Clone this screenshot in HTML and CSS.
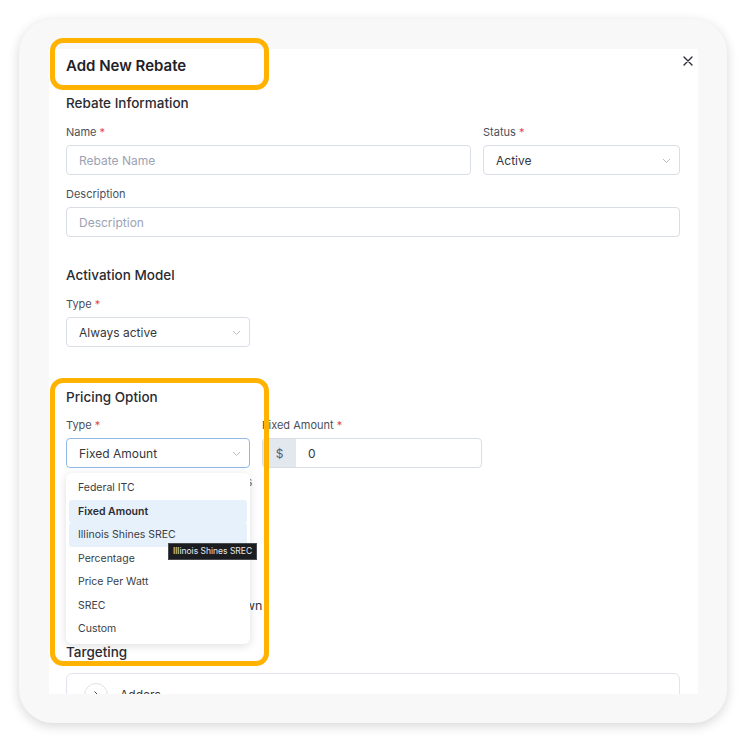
FILE: index.html
```html
<!DOCTYPE html>
<html lang="en">
<head>
  <meta charset="UTF-8">
  <meta name="viewport" content="width=device-width, initial-scale=1.0">
  <title>Add New Rebate</title>
  <link rel="stylesheet" href="styles.css">
</head>
<body>

<div class="frame">
  <div class="modal">
    <button class="close" aria-label="Close">
      <svg width="10" height="10" viewBox="0 0 10 10"><path d="M1 1L9 9M9 1L1 9" stroke="#2b2f3a" stroke-width="1.4" stroke-linecap="round"/></svg>
    </button>

    <h1 class="title">Add New Rebate</h1>

    <h2 class="section">Rebate Information</h2>
    <div class="row row-main">
      <div class="field">
        <label>Name <span class="req">*</span></label>
        <input class="input" type="text" placeholder="Rebate Name">
      </div>
      <div class="field">
        <label>Status <span class="req">*</span></label>
        <div class="select">Active
          <svg class="chev" width="9" height="6" viewBox="0 0 9 6"><path d="M1 1l3.5 3.5L8 1" fill="none" stroke="#b8bec9" stroke-width="1"/></svg>
        </div>
      </div>
    </div>
    <div class="field field-desc">
      <label>Description</label>
      <input class="input" type="text" placeholder="Description">
    </div>

    <h2 class="section section-gap">Activation Model</h2>
    <div class="field field-narrow">
      <label>Type <span class="req">*</span></label>
      <div class="select">Always active
        <svg class="chev" width="9" height="6" viewBox="0 0 9 6"><path d="M1 1l3.5 3.5L8 1" fill="none" stroke="#b8bec9" stroke-width="1"/></svg>
      </div>
    </div>

    <h2 class="section section-pricing">Pricing Option</h2>
    <div class="row row-pricing">
      <div class="field type-field">
        <label>Type <span class="req">*</span></label>
        <div class="select focused">Fixed Amount
          <svg class="chev" width="9" height="6" viewBox="0 0 9 6"><path d="M1 1l3.5 3.5L8 1" fill="none" stroke="#b8bec9" stroke-width="1"/></svg>
        </div>
        <ul class="menu">
          <li>Federal ITC</li>
          <li class="selected">Fixed Amount</li>
          <li class="hover">Illinois Shines SREC</li>
          <li>Percentage</li>
          <li>Price Per Watt</li>
          <li>SREC</li>
          <li>Custom</li>
        </ul>
        <div class="tooltip">Illinois Shines SREC</div>
      </div>
      <div class="field amount-field">
        <label>Fixed Amount <span class="req">*</span></label>
        <div class="input-group">
          <span class="prefix">$</span>
          <span class="value">0</span>
        </div>
      </div>
    </div>
    <p class="hint">Amount deducted from listed prices</p>
    <div class="options">
      <div class="check"><span class="box"></span>Apply once per project</div>
      <div class="check"><span class="box"></span>Allow in financing quotes</div>
      <div class="check"><span class="box"></span>Display rebates in breakdown</div>
    </div>

    <h2 class="section section-target">Targeting</h2>
    <div class="accordion">
      <span class="circle">
        <svg width="10" height="10" viewBox="0 0 10 10"><path d="M3.5 1.5l3.5 3.5-3.5 3.5" fill="none" stroke="#3a3f4a" stroke-width="1"/></svg>
      </span>
      <span class="acc-title">Adders</span>
    </div>
  </div>
</div>

<div class="mark mark-title"></div>
<div class="mark mark-pricing"></div>

</body>
</html>
```

FILE: styles.css
```css
* { box-sizing: border-box; margin: 0; padding: 0; }
body {
  font-family: Inter, "Noto Sans", Arial, sans-serif;
  background: #fff;
  color: #2b2e35;
  width: 746px;
  height: 742px;
  position: relative;
  overflow: hidden;
}
.frame {
  margin: 19px 0 0 19px;
  width: 708px;
  height: 704px;
  padding: 30px 29px 29px 30px;
  background: #f8f8f8;
  border-radius: 34px;
  box-shadow: 0 3px 12px rgba(0, 0, 0, 0.16);
}
.modal {
  position: relative;
  width: 649px;
  height: 645px;
  background: #fff;
  padding: 7px 18px 0 17px;
  overflow: hidden;
}
.close {
  position: absolute;
  top: 5px;
  right: 3px;
  width: 14px;
  height: 14px;
  border: none;
  background: none;
  display: flex;
  align-items: center;
  justify-content: center;
}
.title {
  font-size: 15px;
  font-weight: 600;
  line-height: 20px;
  color: #1f2128;
}
.section {
  margin-top: 17px;
  font-size: 13.5px;
  font-weight: 500;
  line-height: 20px;
  color: #2a2c31;
}
.section-gap { margin-top: 28px; }
.section-pricing { margin-top: 40px; }
.section-target { margin-top: 0; }

.row { display: grid; gap: 12px; }
.row-main { grid-template-columns: 1fr 197px; margin-top: 11px; }
.row-pricing { grid-template-columns: 184px 220px; margin-top: 10px; }

.field label {
  display: block;
  font-size: 11px;
  line-height: 16px;
  color: #4b505b;
  margin-bottom: 5px;
}
.req { color: #e5484d; }
.field-desc { margin-top: 11px; }
.field-narrow { width: 184px; margin-top: 11px; }

.input, .select, .input-group {
  display: flex;
  align-items: center;
  width: 100%;
  height: 30px;
  border: 1px solid #d9dde5;
  border-radius: 4px;
  background: #fff;
  font-family: inherit;
  font-size: 12px;
  color: #34373e;
}
.input { padding: 0 12px; outline: none; }
.input::placeholder { color: #9ba3b4; }
.select { position: relative; padding: 0 12px; }
.select.focused { border-color: #92b9e6; }
.chev { position: absolute; right: 8px; top: 12px; }

.type-field { position: relative; }
.menu {
  position: absolute;
  top: 56px;
  left: 0;
  width: 184px;
  padding: 3px;
  list-style: none;
  background: #fff;
  border-radius: 6px;
  box-shadow: 0 2px 10px rgba(0, 0, 0, 0.13);
  z-index: 3;
}
.menu li {
  height: 23.5px;
  line-height: 23.5px;
  padding: 0 9px;
  font-size: 10.5px;
  color: #3a3d44;
  border-radius: 3px;
}
.menu li.selected { background: #e7f1fb; font-weight: 600; color: #2a2c31; }
.menu li.hover { background: #e7f1fb; }
.tooltip {
  position: absolute;
  top: 126px;
  left: 102px;
  padding: 0 4px;
  height: 17px;
  line-height: 15px;
  font-size: 8.5px;
  color: #e8e8e8;
  background: #1c1d20;
  border: 1px solid #4a4b50;
  white-space: nowrap;
  z-index: 4;
}

.input-group { overflow: hidden; }
.prefix {
  width: 33px;
  height: 100%;
  display: flex;
  align-items: center;
  justify-content: center;
  background: #e3e7ee;
  color: #596070;
}
.value { padding-left: 12px; }

.hint {
  margin-top: 6px;
  font-size: 11px;
  line-height: 16px;
  color: #6b7080;
}
.options {
  margin-top: 58px;
  display: flex;
  flex-direction: column;
  gap: 10px;
  height: 94px;
}
.check {
  display: flex;
  align-items: center;
  gap: 8px;
  font-size: 12.5px;
  color: #34373e;
}
.box {
  width: 14px;
  height: 14px;
  border: 1px solid #c9ced8;
  border-radius: 3px;
}
.accordion {
  margin-top: 11px;
  height: 60px;
  border: 1px solid #e2e5ee;
  border-radius: 6px;
  display: flex;
  align-items: flex-start;
  padding: 9px 0 0 17px;
  gap: 12px;
}
.circle {
  width: 24px;
  height: 24px;
  border: 1px solid #dfe2e8;
  border-radius: 50%;
  display: flex;
  align-items: center;
  justify-content: center;
}
.acc-title {
  font-size: 12px;
  line-height: 24px;
  color: #34373e;
}

.mark {
  position: absolute;
  border: 5px solid #ffb300;
  border-radius: 13px;
  z-index: 10;
}
.mark-title { left: 50px; top: 38px; width: 219px; height: 52px; }
.mark-pricing { left: 50px; top: 378px; width: 219px; height: 288px; }
```
